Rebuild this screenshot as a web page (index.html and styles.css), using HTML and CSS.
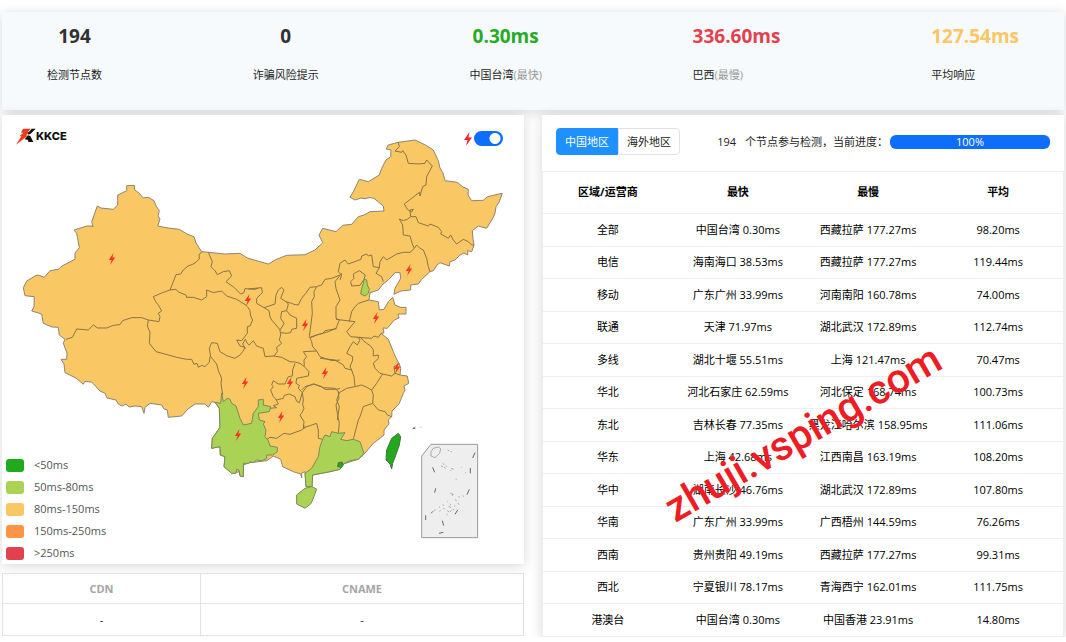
FILE: index.html
```html
<!DOCTYPE html>
<html lang="zh-CN">
<head>
<meta charset="utf-8">
<meta name="viewport" content="width=device-width, initial-scale=1">
<title>KKCE</title>
<link rel="stylesheet" href="styles.css">
</head>
<body>
<header class="panel stats">
  <div class="stat"><strong>194</strong><span>检测节点数</span></div>
  <div class="stat"><strong>0</strong><span>诈骗风险提示</span></div>
  <div class="stat"><strong class="fast">0.30ms</strong><span>中国台湾<small>(最快)</small></span></div>
  <div class="stat stat-left"><strong class="slow">336.60ms</strong><span>巴西<small>(最慢)</small></span></div>
  <div class="stat stat-left"><strong class="mean">127.54ms</strong><span>平均响应</span></div>
</header>
<main class="columns">
  <div class="left">
    <section class="panel map-panel">
      <svg class="map" viewBox="2 115 522 449" role="img" aria-label="中国地图">
        <defs>
          <path id="bolt" d="M1.5,-6 L-3.2,1 H-.4 L-2,6 L3.2,-1.4 H.5 Z"/>
        </defs>
        <path class="land" d="M126.7,185.7 134.3,185.3 134.7,190 139,193 143.3,198 148.3,197.3 154,200.7 156,206 159.3,210.7 158,216 160,219 157.7,226 168,228 179.3,229.3 187,234 194,236.7 196,243 201.7,251.7 208.3,252.3 225,254 240,253.3 247.3,258 260,261.7 268.3,264 276,259.5 286.7,255.3 305,254.7 315,250 322.7,242.7 319,235 322.7,228.3 336,231.7 342.7,225.3 351.7,224.3 358.3,216.7 364,215 370,211.7 384,211 383.3,206 374,198.3 370,197.5 365,198.7 361,198 355,200 350,197.3 353.3,191.7 359.3,179.3 368.3,181.7 379.3,175 381.7,168.3 386,160 390.7,156.7 391,150 386,149 388.3,145 398.3,142.3 415,140 426,145.3 433.3,150 438.3,160.7 440,168 443,173 445,180.7 457.3,182.3 463,187 468.3,189.3 468,195 471.7,200.7 483.3,200.3 487,197 493.3,195.3 502.3,193.3 499.3,201.7 496,206.7 495,213 493.3,217.3 486.7,228.3 478.3,226 472.3,230.7 473,239 474,245 471.7,251.7 467.7,250.7 467.7,255 464,253 460,255 455,260 450,261.7 449.3,266 440,262.7 437,265 433.3,270.7 430,271.7 421.7,279.3 418.3,284 410.7,285 410.7,290 401,291 394,294.3 395,288.3 400.7,278.3 400,272.7 395,272.7 388.3,280 383,284 378.3,290 370,292.7 369,300 378.3,301.7 379.3,310 384,309.3 388.3,301.7 392.7,297.3 395,305 401,307.5 406,307.3 406,314 398,314 399,318 394.3,320 391,324 387.3,328.3 383,328 384,333 381,333.3 388.3,339.3 393.3,351.7 397,360 399.3,364 400.7,368.3 400,375 407.3,376 408.7,383.3 404,386 405,390 403.3,393.3 399.3,403.3 395,408 392,411 391.7,416.7 388.3,420 389,424 384,430 384,435 379,439 373.3,443.3 363.3,455 358.3,459.3 343.3,464 340,469.3 330,471.7 312.7,475 312,486.7 306,486.7 305,471.7 301.7,473 301.7,478 300.8,474 293.3,471.7 282.7,466.7 280.7,459.3 273.3,456 266.7,460.7 250,462.7 243.3,465 243.3,476.7 240,476 239,471.7 231.7,473.3 224,466.7 225,456.7 220,455 220,446.7 211.7,448.3 212.3,438.3 220,427.3 219.3,408.3 215,402.3 211.7,401.7 208.3,407.3 205,404 195,404 188,409 181.7,416 168.3,417.3 167.3,410 164,409 161.7,405 150,403.3 145,407.3 144,413.3 141.7,406.7 135,406 129,407 126,404 122,406 118.3,404 116,400 107,398 105,393.3 100,391 91.7,382 84.5,381.5 83.3,384.3 76,378 65,372.7 64,364 61,359.3 66.7,359.3 67,353 63.3,343.3 65,339.3 59.3,335 58.3,327.3 52,327 43.3,323.3 41.7,314 31.7,311 34,307 34.3,296.7 25,295.7 23.3,287.7 26.7,281 35,276 38.3,275 44.3,277.3 50,270.7 58.3,269.3 62,266 75,259.3 75,253 79.3,247.7 76.7,233.3 74,230 87,226 91.7,226 93,227 91.7,221.7 97.3,206 101,208 113.3,209.3 117.7,205 117.7,195 126.7,190.7Z"/>
        <g class="border" transform="translate(10 170) scale(.3333)">
          <path d="M575,245 567,255 568,267 558,277 548,283 534,288 520,300 512,312 498,314 490,335 480,360 455,369 430,380 437,395 445,405 455,423 445,430 450,440 447,455 415,450 395,443 365,443 338,452 330,464 310,466 290,474 262,474 250,465 235,480 200,477 187,502 168,508"/>
          <path d="M480,360 498,358 505,366 528,375 530,382 550,382 575,390 590,380 590,360 610,368 635,363 650,378 680,388 712,408"/>
          <path d="M595,247 607,275 603,290 615,302 622,314 640,305 658,302 665,318 648,335 672,352 692,372 702,368 705,356 735,358 745,354"/>
          <path d="M415,450 412,468 420,487 418,520 438,545 475,555 500,562 530,568 545,568 552,583 561,580 565,592 575,586 585,590 598,577 600,560"/>
        </g>
        <g class="border" transform="translate(140 240) scale(.3333)">
          <path d="M322,200 330,212 332,228 338,240 330,258 322,260 322,280 305,302 290,300 300,318 315,322 308,335 300,345 285,355 262,348 240,335 232,310 215,308 208,325 212,350 230,372 236,395 245,415 243,430 248,465"/>
          <path d="M325,147 365,143 367,158 350,175 350,190 372,203 387,212 390,230 395,240 408,255 420,270 422,285 418,300 425,310 410,322 412,335 402,348 375,350 370,325 350,318 340,302 328,315 322,310 316,298 308,312 316,326"/>
          <path d="M372,203 405,192 408,165 415,150 425,142 432,150 422,175 438,185 445,192 440,212 425,215 422,235 432,250 428,258 420,270M440,212 450,225 470,235 470,265 455,268 452,278 440,280 422,278"/>
          <path d="M438,185 455,190 465,194 475,195 485,175 497,160 510,142 530,140 545,135 555,118 575,115 600,105"/>
          <path d="M530,140 522,155 523,170 515,185 517,220 508,290 515,305 518,320 530,333 490,335 500,350 492,360 493,380 507,395 505,408 470,415 468,430 478,436 475,445 487,458"/>
          <path d="M402,348 425,352 450,365 465,366 480,370 493,380M465,370 458,390 457,408 445,410 435,432 415,432 400,422 395,435 400,440 392,450 400,470 410,480 430,475 433,466 448,462 465,470 470,484 478,488 487,458"/>
          <path d="M408,478 415,492 400,497 410,503 390,505M487,458 490,480 488,495 492,505 485,520 480,525 492,545 490,565"/>
          <path d="M487,458 500,440 520,432 545,440 555,448 585,448 600,446M510,292 530,285 550,280 555,272 590,266M530,333 540,350 575,362 600,360"/>
        </g>
        <g class="border" transform="translate(320 120) scale(.3333)">
          <path d="M235,67 238,80 225,93 245,97 248,92 258,105 265,130 295,132 315,130 320,120 337,138 320,170 318,195 308,200 300,228 298,217 275,235 253,252 262,268 275,276 280,268 270,270 272,290"/>
          <path d="M272,290 288,290 295,308 325,318 330,312 355,322 365,335 362,342 385,355 392,345 400,360 410,372 430,358 445,365 455,375 462,375"/>
          <path d="M272,290 262,298 250,302 238,297 248,315 250,345 270,348 278,375 283,385 290,375 300,385 310,390 320,415 325,440 330,455"/>
          <path d="M283,385 270,397 250,397 230,402 200,420 190,410 180,425 178,443 168,460 185,470 190,485M178,443 160,440 155,405 145,408 140,402 125,408 123,418 85,432 75,420 60,430 55,455 65,465 60,480"/>
        </g>
        <g class="border" transform="translate(300 240) scale(.3333)">
          <path d="M178,92 160,102 162,115 152,125 155,138 180,136 192,118 196,105Z"/>
          <path d="M125,100 105,125 108,145 120,180 108,200 108,235 118,240 108,265 85,275 50,285 32,293M207,180 175,190 165,200 155,215 148,245M108,238 165,245 140,275 152,290 175,292 M170,292 215,295 222,288 235,292 243,280"/>
          <path d="M175,292 180,300 172,315 160,305 150,320 140,340 158,350 158,360 150,380 155,390 162,410 165,440 185,435 200,442 215,450 230,430 248,402 240,400 225,385 220,370 235,355 235,345 220,348 220,330 212,318 200,310 190,302 180,290"/>
          <path d="M248,402 275,408 285,400 300,405M285,400 282,380 298,372M60,355 105,360 130,375 135,385 155,390M5,450 15,440 42,432 70,443 105,445 118,458 140,445 165,440"/>
          <path d="M118,458 110,480 118,500 112,540M215,450 220,465 218,490 190,500 180,530 175,540M218,490 235,510 255,515 262,525 275,530"/>
          <path class="green" d="M192,118 200,120 202,135 208,148 205,160 195,168 182,162 185,145 190,130Z"/>
        </g>
        <g class="border" transform="translate(190 340) scale(.3333)">
          <path d="M228,300 240,292 260,295 282,280 300,283 335,270 345,262 380,250 385,270 385,295 398,298M445,155 447,175 438,195 442,220 448,250 445,280M505,240 500,260 490,298M340,255 345,265"/>
          <path class="green" d="M95,160 100,185 112,175 120,178 125,190 138,198 150,235 160,255 185,250 190,220 205,200 205,180 220,178 220,195 242,200 238,215 205,220 208,240 225,245 220,252 228,270 225,290 235,302 240,318 262,322 262,335 248,345 230,345 230,356 215,362 200,360 190,368 180,365 175,370 160,370 160,410 150,408 147,390 140,388 138,400 125,400 102,380 105,350 92,345 90,320 65,325 67,295 90,262 88,205 75,187 92,190Z"/>
          <path class="green" d="M398,298 405,285 420,290 425,275 445,280 465,278 452,298 470,302 490,298 510,305 522,340 505,358 480,362 460,372 450,388 420,395 368,405 366,440 348,440 345,400 365,385 385,350 390,320Z"/>
          <path class="green" d="M345,445 365,440 380,447 368,480 362,492 345,505 320,492 320,465Z"/>
          <path class="teal" d="M445,368 456,366 460,376 453,382 443,380Z"/>
        </g>
        <g class="border" transform="translate(330 370) scale(.3333)">
          <path class="teal" d="M205,190 212,200 208,225 195,262 188,280 185,297 180,282 168,270 170,240 185,205Z"/>
          <path class="inset" d="M303,223H443V503H275V258Z"/>
          <path class="isle" d="M310,235 325,231 332,236 329,250 315,263 303,258 303,245Z"/>
          <path class="dash" d="M308,292 314,307M317,355 314,368M287,436V450M337,452 341,467M435,248 428,264M421,294V310M418,358 411,374M383,420 375,433M327,490 340,487M303,430 309,424M248,177 256,172M249,174 256,176"/>
          <path class="reef" d="M353,239l4,4M362,243l3,4M338,280l5,4M333,288l6,2M342,292l5,3M348,287l2,3M363,295l8,3M361,303l3,-3M394,292h2M405,308h3M377,328h3M361,370l9,3M366,378l4,-5M385,380l5,2M398,376l4,4M375,389l5,3M352,394h2M338,404l4,3M359,402l4,3M383,400l5,3M327,412l3,-1M340,416h4M352,422l6,4M360,425l5,-4M368,417l4,3M328,424l4,-3M311,423l6,-4M350,434h3M356,410l7,2M372,408h4M271,172h3"/>
        </g>
        <g class="bolts">
          <use href="#bolt" x="112" y="259"/><use href="#bolt" x="248" y="300"/><use href="#bolt" x="305" y="325"/>
          <use href="#bolt" x="245" y="383"/><use href="#bolt" x="290" y="383"/><use href="#bolt" x="325" y="373"/>
          <use href="#bolt" x="376" y="318"/><use href="#bolt" x="409" y="270"/><use href="#bolt" x="397" y="368"/>
          <use href="#bolt" x="281" y="417"/><use href="#bolt" x="238" y="435"/>
        </g>
      </svg>
      <div class="logo">
        <svg width="20" height="17" viewBox="47 385 60 51" aria-hidden="true">
          <path fill="#f03a20" d="M68,387H91L83,397H90L77,407 82,408 47,435 63,410 58,409 69,399H62Z"/>
          <path fill="#111" d="M94,387H106L91,402 84,405 83,400Z"/>
          <path fill="#111" d="M83,407 90,409 99,427H84L83,421 73,419Z"/>
        </svg>
        <span>KKCE</span>
      </div>
      <label class="switch">
        <svg width="10" height="14" viewBox="-5 -7 10 14" aria-hidden="true"><path d="M1.5,-7 L-4,1 H-.5 L-2,7 L4,-1.5 H.5 Z"/></svg>
        <input type="checkbox" role="switch" aria-label="闪电标记" checked>
      </label>
      <ul class="legend">
        <li><i class="c1"></i>&lt;50ms</li>
        <li><i class="c2"></i>50ms-80ms</li>
        <li><i class="c3"></i>80ms-150ms</li>
        <li><i class="c4"></i>150ms-250ms</li>
        <li><i class="c5"></i>&gt;250ms</li>
      </ul>
    </section>
    <table class="cdn">
      <thead><tr><th>CDN</th><th>CNAME</th></tr></thead>
      <tbody><tr><td>-</td><td>-</td></tr></tbody>
    </table>
  </div>
  <section class="panel results">
    <div class="toolbar">
      <div class="tabs"><button type="button" class="active">中国地区</button><button type="button">海外地区</button></div>
      <p class="progress-text"><span>194</span><span>个节点参与检测，当前进度：</span></p>
      <div class="progress" role="progressbar" aria-label="当前进度" aria-valuenow="100" aria-valuemin="0" aria-valuemax="100">100%</div>
    </div>
    <table class="regions">
      <thead><tr><th>区域/运营商</th><th>最快</th><th>最慢</th><th>平均</th></tr></thead>
      <tbody>
        <tr><td>全部</td><td>中国台湾 0.30ms</td><td>西藏拉萨 177.27ms</td><td>98.20ms</td></tr>
        <tr><td>电信</td><td>海南海口 38.53ms</td><td>西藏拉萨 177.27ms</td><td>119.44ms</td></tr>
        <tr><td>移动</td><td>广东广州 33.99ms</td><td>河南南阳 160.78ms</td><td>74.00ms</td></tr>
        <tr><td>联通</td><td>天津 71.97ms</td><td>湖北武汉 172.89ms</td><td>112.74ms</td></tr>
        <tr><td>多线</td><td>湖北十堰 55.51ms</td><td>上海 121.47ms</td><td>70.47ms</td></tr>
        <tr><td>华北</td><td>河北石家庄 62.59ms</td><td>河北保定 168.74ms</td><td>100.73ms</td></tr>
        <tr><td>东北</td><td>吉林长春 77.35ms</td><td>黑龙江哈尔滨 158.95ms</td><td>111.06ms</td></tr>
        <tr><td>华东</td><td>上海 42.68ms</td><td>江西南昌 163.19ms</td><td>108.20ms</td></tr>
        <tr><td>华中</td><td>湖南长沙 46.76ms</td><td>湖北武汉 172.89ms</td><td>107.80ms</td></tr>
        <tr><td>华南</td><td>广东广州 33.99ms</td><td>广西梧州 144.59ms</td><td>76.26ms</td></tr>
        <tr><td>西南</td><td>贵州贵阳 49.19ms</td><td>西藏拉萨 177.27ms</td><td>99.31ms</td></tr>
        <tr><td>西北</td><td>宁夏银川 78.17ms</td><td>青海西宁 162.01ms</td><td>111.75ms</td></tr>
        <tr><td>港澳台</td><td>中国台湾 0.30ms</td><td>中国香港 23.91ms</td><td>14.80ms</td></tr>
      </tbody>
    </table>
    <div class="watermark">zhuji.vsping.com</div>
  </section>
</main>
</body>
</html>
```
FILE: styles.css
```css
* { box-sizing: border-box; }
body {
  margin: 0;
  padding: 12px 2px 0;
  background: #fff;
  color: #222;
  font: 11px/16px "Open Sans", "Noto Sans CJK SC", sans-serif;
}
.panel {
  background: #fff;
  box-shadow: 0 2px 12px rgba(0, 0, 0, .16);
}
.stats {
  display: flex;
  justify-content: space-between;
  padding: 10px 45px 27px;
  margin-bottom: 5px;
  background: #f6fafd;
}
.stat {
  display: flex;
  flex-direction: column;
  align-items: center;
  gap: 17px;
}
.stat-left { align-items: flex-start; }
.stat strong { font-size: 19px; line-height: 28px; color: #2f3133; }
.stat small { font-size: 11px; color: #999; }
.stat .fast { color: #25ab25; }
.stat .slow { color: #e2414e; }
.stat .mean { color: #f9c763; }
.columns {
  display: grid;
  grid-template-columns: minmax(0, 1fr) minmax(0, 1fr);
  gap: 18px;
  align-items: start;
}
.map-panel {
  display: grid;
  margin-bottom: 9px;
}
.map-panel > * { grid-area: 1 / 1; }
.map { display: block; width: 100%; }
.land { fill: #f9c763; stroke: #8e8672; stroke-linejoin: round; }
.border { fill: none; stroke: #8a7447; stroke-width: 3; stroke-linejoin: round; }
.green { fill: #aad356; stroke: #7c8a58; }
.teal { fill: #22aa1f; stroke: #44713f; }
.inset { fill: #eee; stroke: #999; }
.isle { stroke: #aaa; }
.dash { stroke: #666; }
.reef { stroke: #aaa; }
.bolts { fill: #fb3328; }
.logo {
  display: flex;
  align-items: flex-start;
  align-self: start;
  justify-self: start;
  padding: 13px 0 0 14px;
  font: 800 11px/16px Inter, sans-serif;
  color: #111;
}
.switch {
  display: flex;
  align-items: center;
  align-self: start;
  justify-self: end;
  gap: 1px;
  padding: 16px 21px 0 0;
}
.switch svg { fill: #f5222d; }
.switch input {
  appearance: none;
  width: 29px;
  height: 15px;
  margin: 0;
  border-radius: 8px;
  background: radial-gradient(circle at 21px 50%, #fff 5px, transparent 6px) #0d6efd;
}
.legend {
  display: flex;
  flex-direction: column;
  align-self: end;
  justify-self: start;
  gap: 6px;
  margin: 0;
  padding: 0 0 3px 4px;
  list-style: none;
  color: #555;
}
.legend li { display: flex; align-items: center; gap: 10px; }
.legend i { width: 18px; height: 13px; border-radius: 3px; }
.c1 { background: #22aa1f; }
.c2 { background: #aad356; }
.c3 { background: #f9c763; }
.c4 { background: #ff9447; }
.c5 { background: #e2414e; }
table { width: 100%; border-collapse: collapse; table-layout: fixed; text-align: center; }
th, td { padding: 0; }
.cdn th, .cdn td { border: 1px solid #dfe2ea; }
.cdn th { height: 30px; color: #a5a5a5; }
.cdn td { height: 32px; }
.cdn th:first-child { width: 38%; }
.results { position: relative; color: #000; }
.toolbar {
  display: flex;
  align-items: center;
  height: 56px;
  padding: 0 14px 3px;
}
.tabs { display: flex; }
.tabs button {
  height: 27px;
  padding: 0 8px;
  border: 1px solid #e2e2e2;
  border-radius: 0 4px 4px 0;
  background: #fff;
  color: #222;
  font: inherit;
}
.tabs .active {
  border-color: #1e90ff;
  border-radius: 4px 0 0 4px;
  background: #1e90ff;
  color: #fff;
}
.progress-text { display: flex; gap: 9px; margin: 0 2px 0 auto; color: #222; white-space: nowrap; }
.progress {
  width: 160px;
  height: 14px;
  border-radius: 6px;
  background: #0d6efd;
  color: #fff;
  line-height: 14px;
  text-align: center;
}
.regions { border: 1px solid #eee; }
.regions th { height: 42px; padding-bottom: 2px; border-top: 1px solid #eee; }
.regions td { height: 32px; padding-bottom: 1px; border-top: 1px solid #eee; }
.regions tbody tr:nth-child(odd) td { height: 33px; padding-bottom: 0; }
.watermark {
  position: absolute;
  top: 61%;
  left: 50%;
  color: #ee1c25;
  font: 500 41px/48px Roboto, sans-serif;
  white-space: nowrap;
  transform: translate(-50%, -50%) rotate(-30deg);
  pointer-events: none;
}
```
